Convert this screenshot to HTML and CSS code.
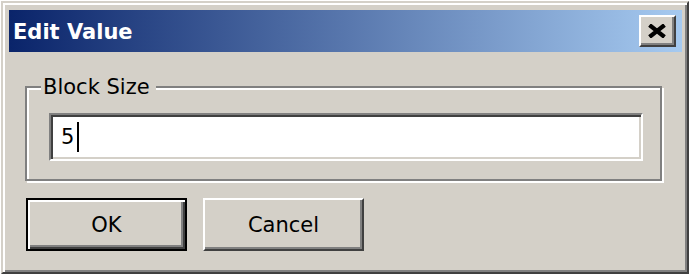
FILE: index.html
```html
<!DOCTYPE html>
<html>
<head>
<meta charset="utf-8">
<title>Edit Value</title>
<link rel="stylesheet" href="styles.css">
</head>
<body>
<div class="window">
  <div class="titlebar">
    <span class="title">Edit Value</span>
    <button class="close" type="button" aria-label="Close">
      <svg width="20" height="14" viewBox="0 0 20 14">
        <path d="M2.5 1 L17.5 13 M17.5 1 L2.5 13" stroke="#000" stroke-width="4.2" stroke-linecap="butt" fill="none"/>
      </svg>
    </button>
  </div>
  <div class="group">
    <span class="group-label">Block Size</span>
    <div class="field"><span class="value">5</span><span class="caret"></span></div>
  </div>
  <div class="buttons">
    <button class="btn default" type="button">OK</button>
    <button class="btn" type="button">Cancel</button>
  </div>
</div>
</body>
</html>
```

FILE: styles.css
```css
html, body {
  margin: 0;
  padding: 0;
  background: #ffffff;
}

body {
  font-family: "DejaVu Sans", Verdana, sans-serif;
  font-size: 21px;
  color: #000;
}

.window {
  box-sizing: border-box;
  width: 688px;
  height: 273px;
  margin: 1px 0 0 1px;
  background: #d4d0c8;
  border: 2px solid;
  border-color: #d4d0c8 #404040 #404040 #d4d0c8;
  box-shadow: inset 2px 2px 0 #ffffff, inset -2px -2px 0 #808080;
  padding: 7px 5px 0 6px;
  display: flex;
  flex-direction: column;
}

.titlebar {
  height: 42px;
  display: flex;
  align-items: center;
  justify-content: space-between;
  background: linear-gradient(to right, #0a246a, #a6caf0);
  padding: 0 6px 0 4px;
}

.title {
  color: #ffffff;
  font-weight: bold;
  font-size: 21px;
  line-height: 24px;
  margin-top: 1px;
}

.close {
  box-sizing: border-box;
  width: 37px;
  height: 32px;
  padding: 0;
  margin: 0;
  background: #d4d0c8;
  border: 2px solid;
  border-color: #ffffff #404040 #404040 #ffffff;
  box-shadow: inset -2px -2px 0 #808080;
  display: flex;
  align-items: center;
  justify-content: center;
}

.close svg {
  display: block;
  margin: 0 1px 1px 0;
}

.group {
  box-sizing: border-box;
  width: 637px;
  margin: 34px 0 0 16px;
  border: 2px solid #808080;
  box-shadow: inset 2px 2px 0 #ffffff, 2px 2px 0 #ffffff;
  display: flex;
  flex-direction: column;
  align-items: flex-start;
  padding-bottom: 18px;
}

.group-label {
  display: block;
  height: 24px;
  line-height: 24px;
  margin: -13px 0 0 14px;
  padding: 0 6px 0 2px;
  background: #d4d0c8;
}

.field {
  box-sizing: border-box;
  width: 594px;
  height: 48px;
  margin: 14px 0 0 22px;
  background: #ffffff;
  border: 2px solid;
  border-color: #808080 #ffffff #ffffff #808080;
  box-shadow: inset 2px 2px 0 #404040, inset -2px -2px 0 #d4d0c8;
  display: flex;
  align-items: center;
  padding-left: 10px;
}

.value {
  line-height: 24px;
}

.caret {
  width: 2px;
  height: 30px;
  background: #000;
  margin-left: 3px;
}

.buttons {
  display: flex;
  gap: 16px;
  margin: 17px 0 0 17px;
}

.btn {
  box-sizing: border-box;
  width: 161px;
  height: 53px;
  margin: 0;
  padding: 0;
  font-family: "DejaVu Sans", Verdana, sans-serif;
  font-size: 21px;
  color: #000;
  background: #d4d0c8;
  border: 2px solid;
  border-color: #ffffff #404040 #404040 #ffffff;
  box-shadow: inset -2px -2px 0 #808080;
}

.btn.default {
  border-color: #000000;
  box-shadow: inset 2px 2px 0 #ffffff, inset -2px -2px 0 #404040, inset -4px -4px 0 #808080;
}
```
